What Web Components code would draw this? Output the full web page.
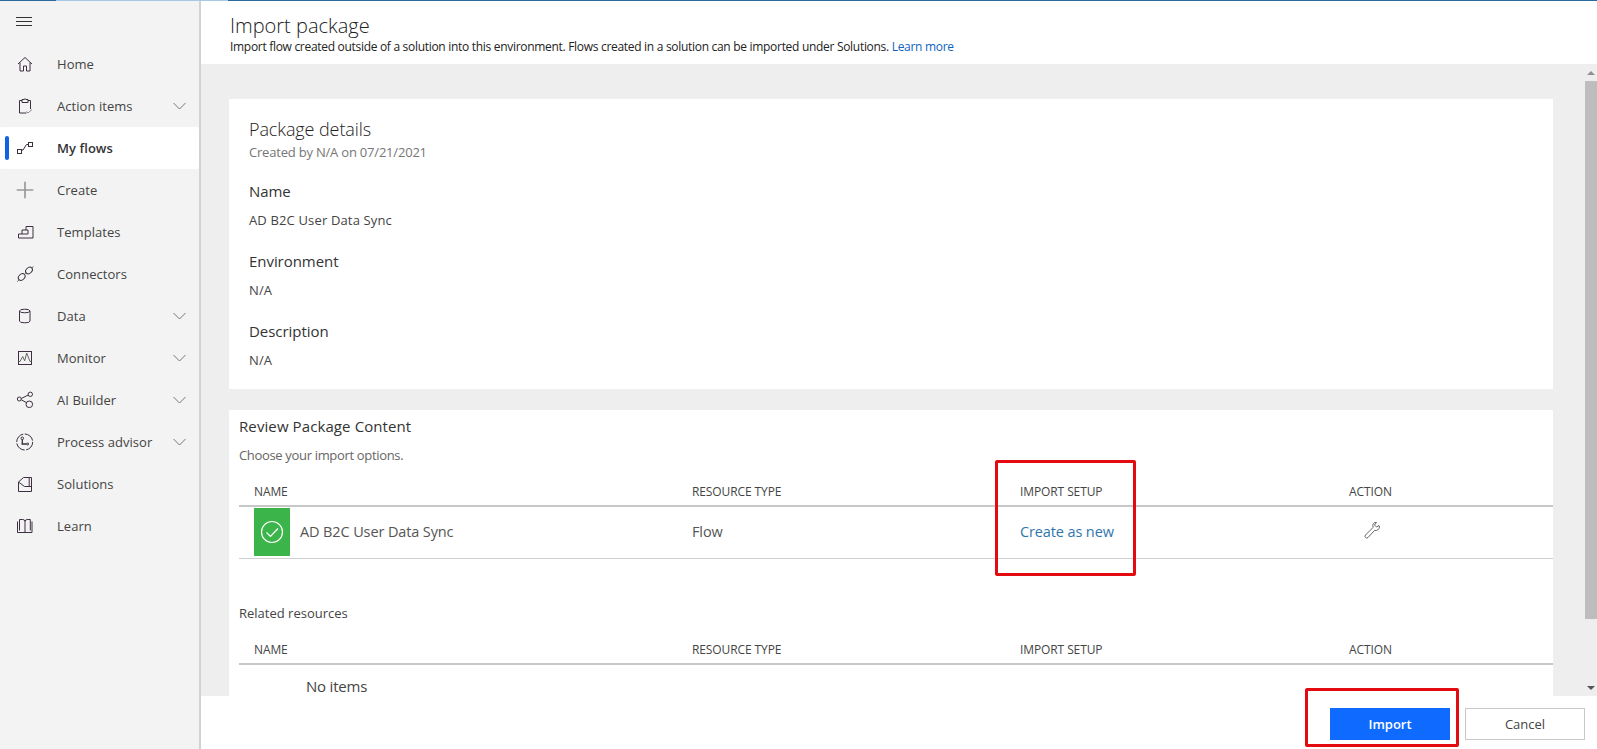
<!DOCTYPE html>
<html lang="en">
<head>
<meta charset="utf-8">
<title>Import package</title>
<style>
  html, body { margin: 0; height: 100%; overflow: hidden; background: #fff; }
  body { font-family: "Open Sans", "Liberation Sans", sans-serif; color: #333; }
</style>
</head>
<body>
<app-shell>
  <side-nav slot="nav">
    <nav-item icon="home">Home</nav-item>
    <nav-item icon="clipboard" expandable>Action items</nav-item>
    <nav-item icon="flows" active>My flows</nav-item>
    <nav-item icon="plus">Create</nav-item>
    <nav-item icon="templates">Templates</nav-item>
    <nav-item icon="plug">Connectors</nav-item>
    <nav-item icon="data" expandable>Data</nav-item>
    <nav-item icon="monitor" expandable>Monitor</nav-item>
    <nav-item icon="ai" expandable>AI Builder</nav-item>
    <nav-item icon="process" expandable>Process advisor</nav-item>
    <nav-item icon="solutions">Solutions</nav-item>
    <nav-item icon="learn">Learn</nav-item>
  </side-nav>
  <page-header slot="header"></page-header>
  <details-card>
    <detail-field label="Name">AD B2C User Data Sync</detail-field>
    <detail-field label="Environment">N/A</detail-field>
    <detail-field label="Description">N/A</detail-field>
  </details-card>
  <review-card></review-card>
  <footer-bar slot="footer"></footer-bar>
</app-shell>

<script>
const ICONS = {
  home: '<path d="M4 11 11 4.500 18 11M6 9.500V18h3.500v-5h3v5H16V9.500"/>',
  clipboard: '<path d="M8 5.500H5.500V18h7M14 5.500h2.500V14M8 7.500v-3h2a1.200 1.200 0 0 1 2 0h2v3z"/><path d="m12.500 16.500 1.500 1.500 4-3.500" stroke="#888"/>',
  flows: '<rect x="3.500" y="12.500" width="4" height="4"/><rect x="14.500" y="5.500" width="4" height="4"/><path d="M8 13h1l3.500-5.500H14"/>',
  plus: '<path d="M11 2.700v16.600M2.700 11h16.600" stroke="#999" stroke-width="1.700"/>',
  templates: '<path d="M4.500 17h14.500V5.500h-7V9H8v4H4.500zM8 13h6V9h-2"/>',
  plug: '<ellipse cx="7.700" cy="14" rx="3.800" ry="2.800" transform="rotate(-45 7.700 14)"/><ellipse cx="15" cy="7.500" rx="3.800" ry="2.800" transform="rotate(-45 15 7.500)"/><path d="M10.500 11.200 12.300 9.500M3.300 18.700l2-2.200M17.800 5l1.700-1.500" stroke="#666"/>',
  data: '<path d="M5.500 6v10a5.200 1.800 0 0 0 10.500 0V6"/><ellipse cx="10.700" cy="6" rx="5.200" ry="1.800"/>',
  monitor: '<rect x="4.500" y="4.500" width="13" height="13"/><path d="M4.500 14.500H6l2.700-5 2 4.300 2-7.800 3.300 8.500h1.500" stroke="#666"/>',
  ai: '<circle cx="5.300" cy="10" r="2"/><circle cx="16.300" cy="5.300" r="2.200"/><circle cx="15.300" cy="15.300" r="3.300"/><path d="M7.300 9.500l7-3.500M7.300 10.800l5.500 3"/>',
  process: '<circle cx="10.700" cy="11" r="8" stroke-dasharray="11 1.500"/><circle cx="8.300" cy="7.300" r="1.300"/><circle cx="13.600" cy="13" r="1"/><path d="M8.300 8.600V13h4.300M7.500 13h2" stroke-width="1.300"/>',
  solutions: '<path d="M4.500 9 9.500 4.500h8v14h-13zM4.500 9l6 4.500h7M15.200 4.500v9"/>',
  learn: '<path d="M3.500 6.500v11h14.500v-11M5.500 15.500V4.500h3.300a2.200 2.200 0 0 1 2.200 2v10.500M16.300 15.500V4.500h-3.100A2.200 2.200 0 0 0 11 6.500"/>'
};

class AppShell extends HTMLElement {
  connectedCallback() {
    this.attachShadow({ mode: 'open' }).innerHTML = `
      <style>
        :host { display: grid; grid-template-columns: 201px 1fr; width: 100vw; height: 100vh; position: relative; overflow: hidden; }
        .strip { position: absolute; top: 0; left: 0; right: 0; height: 1px; background: linear-gradient(90deg, #2b6a9f 0 56px, #a9c8e6 56px 228px, #2b6a9f 228px); z-index: 3; }
        main { display: flex; flex-direction: column; min-width: 0; height: 100vh; }
        .scroll { flex: 1; display: flex; min-height: 0; background: #eee; overflow: hidden; }
        .content { flex: 1; min-width: 0; padding: 35px 32px 0 28px; overflow: hidden; display: flex; flex-direction: column; gap: 21px; }
        .note { position: absolute; box-sizing: border-box; border: 3px solid #e30b0f; border-radius: 2px; z-index: 4; pointer-events: none; }
        .note.setup { left: 995px; top: 460px; width: 141px; height: 116px; }
        .note.import { left: 1305px; top: 688px; width: 154px; height: 59px; }
      </style>
      <div class="strip"></div>
      <slot name="nav"></slot>
      <main>
        <slot name="header"></slot>
        <div class="scroll">
          <div class="content"><slot></slot></div>
          <fake-scrollbar></fake-scrollbar>
        </div>
        <slot name="footer"></slot>
      </main>
      <div class="note setup"></div>
      <div class="note import"></div>`;
  }
}

class SideNav extends HTMLElement {
  connectedCallback() {
    this.attachShadow({ mode: 'open' }).innerHTML = `
      <style>
        :host { display: flex; flex-direction: column; background: #f3f3f3; border-right: 2px solid #d2d2d2; height: 100vh; box-sizing: border-box; padding-top: 1px; }
        .burger { height: 42px; display: flex; align-items: center; padding-left: 16px; }
        svg { display: block; }
      </style>
      <div class="burger"><svg width="16" height="12" viewBox="0 0 16 12" stroke="#333" fill="none"><path d="M0 1.500h16M0 5.500h16M0 9.500h16"/></svg></div>
      <slot></slot>`;
  }
}

class NavItem extends HTMLElement {
  connectedCallback() {
    const active = this.hasAttribute('active');
    const chev = this.hasAttribute('expandable')
      ? '<svg class="chev" width="13" height="8" viewBox="0 0 13 8" fill="none" stroke="#777"><path d="M.5 1l6 6 6-6"/></svg>' : '';
    this.attachShadow({ mode: 'open' }).innerHTML = `
      <style>
        :host { display: flex; align-items: center; height: 42px; position: relative; font-size: 13px; letter-spacing: .05px; color: #444; }
        :host([active]) { background: #fff; border-radius: 2px; font-weight: 600; color: #333; }
        .bar { position: absolute; left: 5px; top: 9px; width: 4px; height: 24px; border-radius: 2px; background: #0f62e6; }
        .ico { width: 22px; height: 22px; margin-left: 14px; margin-right: 21px; fill: none; stroke: #3c2f3f; stroke-width: 1; flex: none; }
        .label { flex: 1; }
        .chev { margin-right: 13px; }
      </style>
      ${active ? '<div class="bar"></div>' : ''}
      <svg class="ico" viewBox="0 0 22 22">${ICONS[this.getAttribute('icon')] || ''}</svg>
      <span class="label"><slot></slot></span>
      ${chev}`;
  }
}

class PageHeader extends HTMLElement {
  connectedCallback() {
    this.attachShadow({ mode: 'open' }).innerHTML = `
      <style>
        :host { display: block; height: 64px; box-sizing: border-box; padding: 13px 0 0 29px; background: #fff; color: #333; flex: none; }
        h1 { margin: 0; font-size: 20px; font-weight: 300; line-height: 26px; color: #222; }
        p { margin: 0; font-size: 12px; line-height: 15px; color: #222; letter-spacing: -.3px; }
        a { color: #0f62c0; text-decoration: none; }
      </style>
      <h1>Import package</h1>
      <p>Import flow created outside of a solution into this environment. Flows created in a solution can be imported under Solutions. <a href="#">Learn more</a></p>`;
  }
}

class DetailsCard extends HTMLElement {
  connectedCallback() {
    this.attachShadow({ mode: 'open' }).innerHTML = `
      <style>
        :host { display: block; background: #fff; height: 290px; box-sizing: border-box; padding: 18px 20px 0; flex: none; }
        h2 { margin: 0; font-size: 18px; font-weight: 300; line-height: 24px; letter-spacing: -.1px; color: #222; }
        .sub { font-size: 13px; line-height: 16px; letter-spacing: -.2px; color: #767676; margin: 3px 0 21px; }
      </style>
      <h2>Package details</h2>
      <div class="sub">Created by N/A on 07/21/2021</div>
      <slot></slot>`;
  }
}

class DetailField extends HTMLElement {
  connectedCallback() {
    this.attachShadow({ mode: 'open' }).innerHTML = `
      <style>
        :host { display: block; height: 70px; }
        .k { font-size: 15px; line-height: 20px; letter-spacing: -.05px; color: #333; }
        .v { font-size: 13px; line-height: 18px; letter-spacing: .15px; color: #444; margin-top: 10px; }
      </style>
      <div class="k">${this.getAttribute('label')}</div>
      <div class="v"><slot></slot></div>`;
  }
}

class ReviewCard extends HTMLElement {
  connectedCallback() {
    const head = `
      <div class="cell">NAME</div><div class="cell">RESOURCE TYPE</div><div class="cell">IMPORT SETUP</div><div class="cell act">ACTION</div>`;
    this.attachShadow({ mode: 'open' }).innerHTML = `
      <style>
        :host { display: block; background: #fff; flex: 1; min-height: 0; padding: 0 0 0 10px; overflow: hidden; color: #333; }
        h3 { margin: 0; padding-top: 6px; font-size: 15px; font-weight: 400; line-height: 20px; letter-spacing: .1px; }
        .choose { font-size: 13px; line-height: 16px; color: #666; letter-spacing: -.33px; margin-top: 11px; }
        .grid { display: grid; grid-template-columns: 453px 328px 329px 1fr; align-items: center; }
        .head { height: 28px; border-bottom: 2px solid #c8c8c8; font-size: 12px; color: #444; letter-spacing: -.1px; }
        .head .cell:first-child { padding-left: 15px; }
        .act { width: 50px; }
        .row { height: 49px; padding-bottom: 2px; border-bottom: 1px solid #d0d0d0; font-size: 14.5px; color: #555; letter-spacing: -.12px; }
        .first { display: flex; align-items: center; gap: 10px; padding-left: 15px; }
        .badge { width: 36px; height: 48px; background: #3bb44a; display: flex; align-items: center; justify-content: center; }
        .link { color: #2f76ad; }
        .wrench { margin: -4px 0 0 14px; display: block; }
        .related { font-size: 13px; line-height: 16px; color: #444; margin-top: 46px; }
        .head2 { margin-top: 15px; height: 27px; }
        .none { font-size: 15px; line-height: 16px; color: #444; letter-spacing: -.2px; padding: 13px 0 0 67px; }
      </style>
      <h3>Review Package Content</h3>
      <div class="choose">Choose your import options.</div>
      <div class="grid head" style="margin-top:14px">${head}</div>
      <div class="grid row">
        <div class="first">
          <div class="badge"><svg width="24" height="24" viewBox="0 0 24 24" fill="none" stroke="#fff" stroke-width="1.200"><circle cx="12" cy="12" r="10.500"/><path d="m6.500 12.500 4 4 7.500-8"/></svg></div>
          <span>AD B2C User Data Sync</span>
        </div>
        <div>Flow</div>
        <div class="link">Create as new</div>
        <div><svg class="wrench" width="20" height="20" viewBox="0 0 20 20" fill="none" stroke="#666"><path d="M2.500 15 10 7.500a4.500 4.500 0 0 1 1.500-5l2 0-2 2.500 2 2 2.500-1.500.5 1.500a4.500 4.500 0 0 1-5 3.500L5 17.500a1.700 1.700 0 0 1-2.500-2.500z"/></svg></div>
      </div>
      <div class="related">Related resources</div>
      <div class="grid head head2">${head}</div>
      <div class="none">No items</div>`;
  }
}

class FakeScrollbar extends HTMLElement {
  connectedCallback() {
    this.attachShadow({ mode: 'open' }).innerHTML = `
      <style>
        :host { display: flex; flex-direction: column; width: 12px; flex: none; background: #eee; }
        .btn { height: 17px; display: flex; align-items: center; justify-content: center; }
        .thumb { height: 538px; background: #bdbdbd; }
        .fill { flex: 1; }
        .up { border: 4px solid transparent; border-top: 0; border-bottom: 4px solid #8f8f8f; }
        .down { border: 4px solid transparent; border-bottom: 0; border-top: 4px solid #555; }
      </style>
      <div class="btn"><div class="up"></div></div>
      <div class="thumb"></div>
      <div class="fill"></div>
      <div class="btn"><div class="down"></div></div>`;
  }
}

class FooterBar extends HTMLElement {
  connectedCallback() {
    this.attachShadow({ mode: 'open' }).innerHTML = `
      <style>
        :host { display: flex; justify-content: flex-end; align-items: flex-start; gap: 15px; height: 53px; box-sizing: border-box; padding: 12px 12px 0 0; background: #fff; flex: none; }
        button { width: 120px; height: 32px; box-sizing: border-box; font: inherit; font-size: 13px; border-radius: 0; padding: 0; }
        .primary { background: #0f6bff; border: 0; color: #fff; font-weight: 600; }
        .plain { background: #fff; border: 1px solid #c8c8c8; color: #444; }
      </style>
      <button class="primary">Import</button>
      <button class="plain">Cancel</button>`;
  }
}

customElements.define('app-shell', AppShell);
customElements.define('side-nav', SideNav);
customElements.define('nav-item', NavItem);
customElements.define('page-header', PageHeader);
customElements.define('details-card', DetailsCard);
customElements.define('detail-field', DetailField);
customElements.define('review-card', ReviewCard);
customElements.define('fake-scrollbar', FakeScrollbar);
customElements.define('footer-bar', FooterBar);
</script>
</body>
</html>
